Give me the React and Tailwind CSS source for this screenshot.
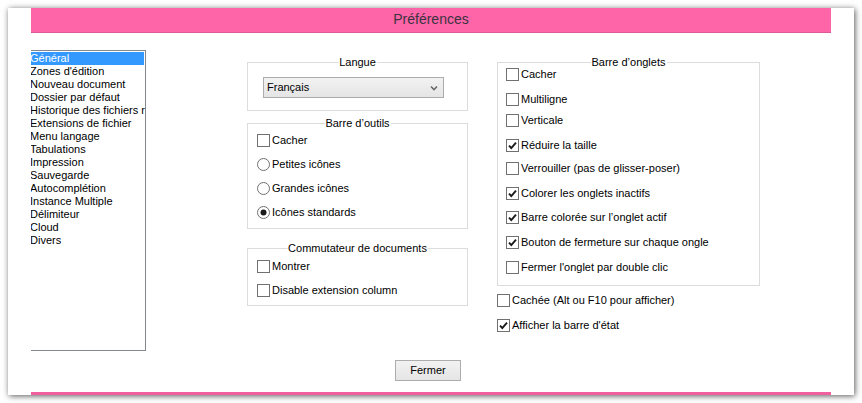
import React from 'react'

const FONT = { fontFamily: '"Liberation Sans", Arial, sans-serif' }

const pages = [
  'Général',
  "Zones d'édition",
  'Nouveau document',
  'Dossier par défaut',
  'Historique des fichiers récents',
  'Extensions de fichier',
  'Menu langage',
  'Tabulations',
  'Impression',
  'Sauvegarde',
  'Autocomplétion',
  'Instance Multiple',
  'Délimiteur',
  'Cloud',
  'Divers',
]

const tabOptions = [
  { label: 'Cacher', checked: false, mt: 'mt-[5px]' },
  { label: 'Multiligne', checked: false, mt: 'mt-[12px]' },
  { label: 'Verticale', checked: false, mt: 'mt-[8px]' },
  { label: 'Réduire la taille', checked: true, mt: 'mt-[12px]' },
  { label: 'Verrouiller (pas de glisser-poser)', checked: false, mt: 'mt-[10px]' },
  { label: 'Colorer les onglets inactifs', checked: true, mt: 'mt-[12px]' },
  { label: 'Barre colorée sur l’onglet actif', checked: true, mt: 'mt-[11px]' },
  { label: 'Bouton de fermeture sur chaque ongle', checked: true, mt: 'mt-[12px]' },
  { label: "Fermer l'onglet par double clic", checked: false, mt: 'mt-[12px]' },
]

function CheckBox({ checked }) {
  return (
    <svg width="13" height="13" viewBox="0 0 13 13" className="shrink-0">
      <rect x="0.5" y="0.5" width="12" height="12" fill="#fff" stroke="#707070" />
      {checked && (
        <path d="M3 6.6 L5.3 9 L10 3.6" fill="none" stroke="#1a1a1a" strokeWidth="1.9" />
      )}
    </svg>
  )
}

function Radio({ checked }) {
  return (
    <svg width="13" height="13" viewBox="0 0 13 13" className="shrink-0">
      <circle cx="6.5" cy="6.5" r="6" fill="#fff" stroke="#707070" />
      {checked && <circle cx="6.5" cy="6.5" r="3" fill="#1a1a1a" />}
    </svg>
  )
}

function Check({ label, checked, className = '' }) {
  return (
    <div className={`flex h-[13px] items-center gap-[2px] ${className}`}>
      <CheckBox checked={checked} />
      <span className="whitespace-nowrap leading-[13px]">{label}</span>
    </div>
  )
}

function Option({ label, checked }) {
  return (
    <div className="flex h-[24px] items-center gap-[2px]">
      <Radio checked={checked} />
      <span className="whitespace-nowrap">{label}</span>
    </div>
  )
}

function Group({ title, className = '', children }) {
  return (
    <div className={`relative border border-[#dcdcdc] ${className}`}>
      <span className="absolute left-1/2 top-[-8px] -translate-x-1/2 whitespace-nowrap bg-white px-[1px] leading-[14px]">
        {title}
      </span>
      {children}
    </div>
  )
}

export default function App() {
  return (
    <div className="h-[403px] w-[862px] overflow-hidden bg-white pl-[8px] pt-[8px] text-[11px] text-black" style={FONT}>
      <div className="flex h-[387px] w-[846px] flex-col bg-white pl-[23px] shadow-[1px_1px_6px_rgba(0,0,0,0.65)]">
        <div className="flex h-[25px] w-[800px] items-center justify-center border-b border-[#dc5a97] bg-[#fe64a8] pb-[2px] text-[14px] text-[#3a3340]">
          Préférences
        </div>

        <div className="mt-[17px] flex items-start">
          <div className="h-[301px] w-[115px] overflow-hidden border-b border-r border-t border-[#828790] pr-[1px] pt-[1px]">
            {pages.map((p, i) => (
              <div
                key={p}
                className={`-ml-[1px] h-[13px] whitespace-nowrap leading-[13px] ${
                  i === 0 ? 'bg-[#3399ff] text-white' : ''
                }`}
              >
                {p}
              </div>
            ))}
          </div>

          <div className="ml-[101px] mt-[12px] flex w-[221px] flex-col">
            <Group title="Langue" className="h-[49px]">
              <div className="ml-[15px] mt-[14px] flex h-[21px] w-[181px] items-center justify-between border border-[#acacac] bg-gradient-to-b from-[#f2f2f2] to-[#e5e5e5] pl-[3px] pr-[5px]">
                <span>Français</span>
                <svg width="8" height="6" viewBox="0 0 8 6">
                  <path d="M1 1.5 L4 4.5 L7 1.5" fill="none" stroke="#6a6a6a" strokeWidth="1.6" />
                </svg>
              </div>
            </Group>

            <Group title="Barre d’outils" className="mt-[12px] h-[106px] pl-[9px] pt-[4px]">
              <div className="flex h-[24px] items-center">
                <Check label="Cacher" checked={false} />
              </div>
              <Option label="Petites icônes" />
              <Option label="Grandes icônes" />
              <Option label="Icônes standards" checked />
            </Group>

            <Group title="Commutateur de documents" className="mt-[19px] h-[58px] pl-[9px] pt-[5px]">
              <div className="flex h-[24px] items-center">
                <Check label="Montrer" checked={false} />
              </div>
              <div className="flex h-[24px] items-center">
                <Check label="Disable extension column" checked={false} />
              </div>
            </Group>
          </div>

          <div className="ml-[29px] mt-[12px] flex w-[263px] flex-col">
            <Group title="Barre d’onglets" className="h-[224px] pl-[8px]">
              {tabOptions.map((o) => (
                <Check key={o.label} label={o.label} checked={o.checked} className={o.mt} />
              ))}
            </Group>
            <Check label="Cachée (Alt ou F10 pour afficher)" checked={false} className="mt-[8px]" />
            <Check label="Afficher la barre d'état" checked className="mt-[12px]" />
          </div>
        </div>

        <button
          type="button"
          className="ml-[364px] mt-[9px] flex h-[21px] w-[66px] items-center justify-center border border-[#acacac] bg-gradient-to-b from-[#f2f2f2] to-[#e5e5e5] text-[11px] text-black"
        >
          Fermer
        </button>

        <div className="mt-auto h-[3px] w-[800px] bg-[#f0609f]" />
      </div>
    </div>
  )
}
